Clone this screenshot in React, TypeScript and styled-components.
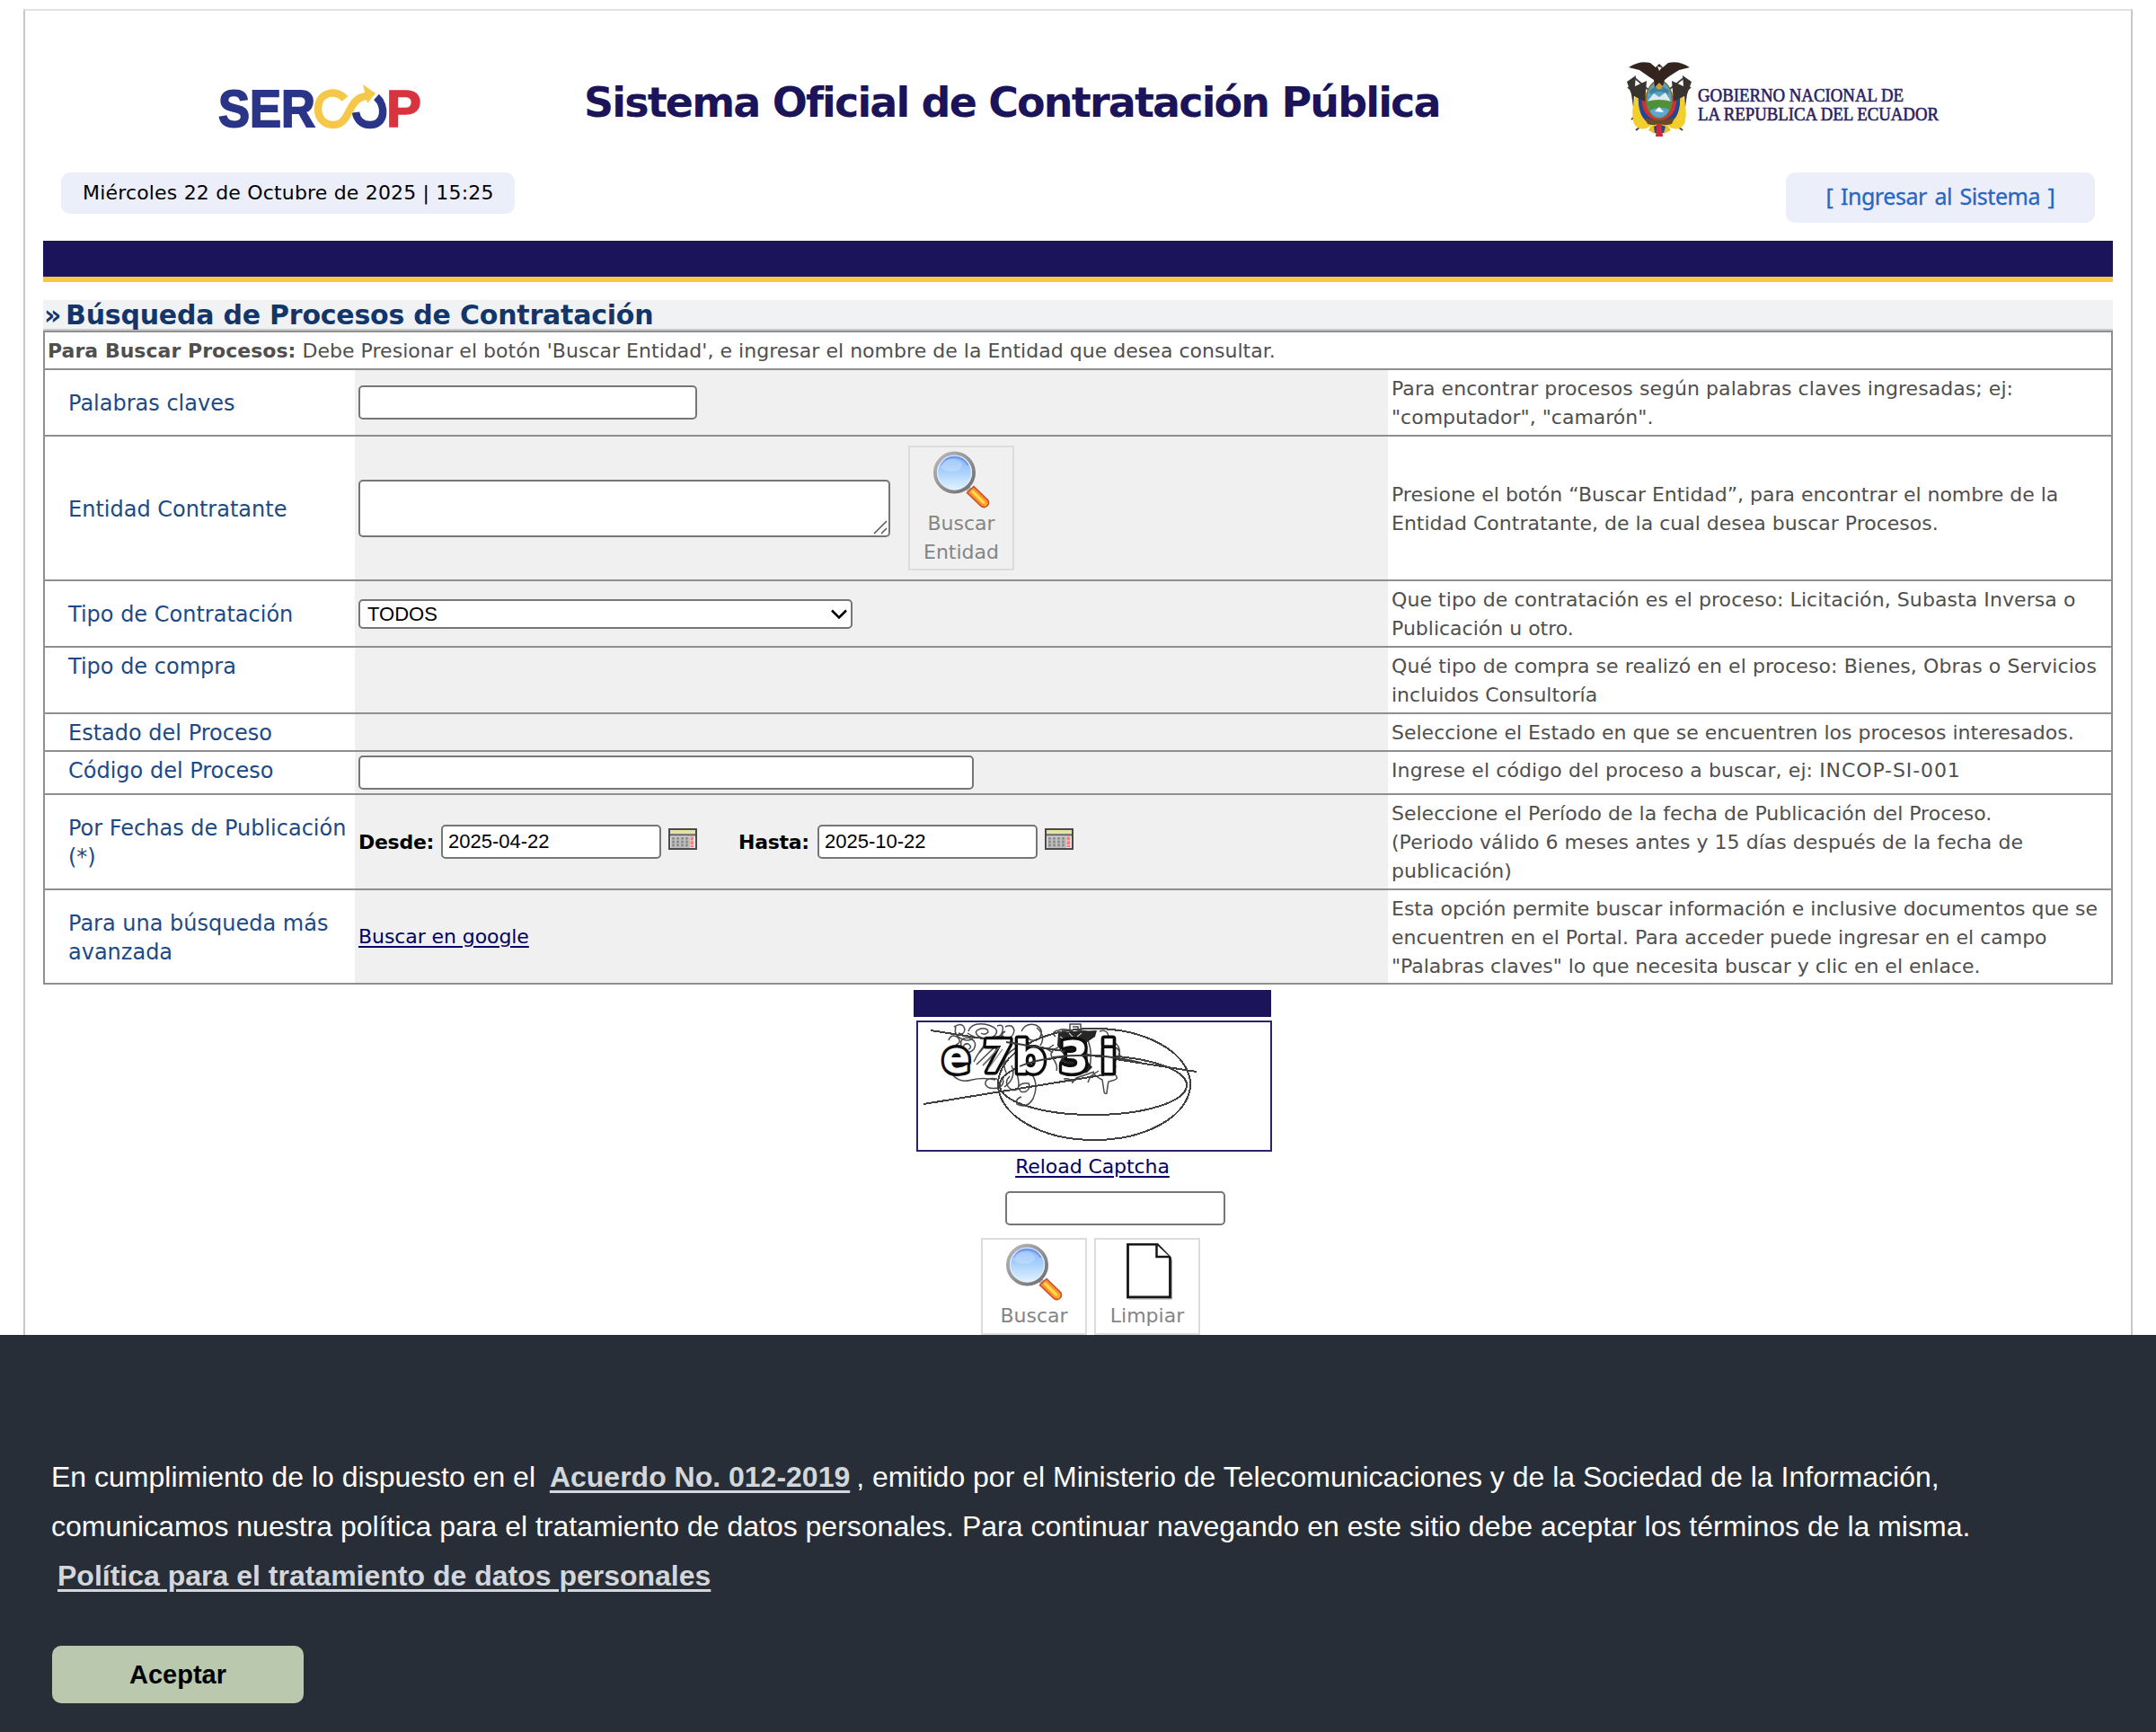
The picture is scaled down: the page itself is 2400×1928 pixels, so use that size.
import React from "react";
import styled, { createGlobalStyle, css } from "styled-components";

const verdana = `Verdana, "DejaVu Sans", sans-serif`;
const arial = `Arial, "Liberation Sans", sans-serif`;
const navy = "#1b145b";
const line = "#8f8f8f";

const GlobalStyle = createGlobalStyle`
  *, *::before, *::after { box-sizing: border-box; }
  html, body { margin: 0; padding: 0; background: #fff; }
  body { height: 1928px; overflow: hidden; font-family: ${verdana}; font-size: 22px; line-height: 32px; color: #000; }
`;

const Page = styled.div`
  width: 2400px;
  height: 1928px;
  padding: 10px 26px 0;
  overflow: hidden;
`;

const Frame = styled.main`
  height: 2000px;
  padding: 0 20px;
  border: 2px solid #c8c8c8;
  border-top-color: #dfe2e8;
`;

/* ---------- header ---------- */

const Header = styled.header`
  display: grid;
  grid-template-columns: 602px 1161px 1fr;
  height: 180px;
`;

const LogoCell = styled.div<{ $top: number; $left?: number }>`
  padding: ${(p) => p.$top}px 0 0 ${(p) => p.$left ?? 0}px;
  svg { display: block; overflow: visible; }
`;

const SiteTitle = styled.h1`
  margin: 0;
  padding-top: 73px;
  color: ${navy};
  font-size: 46px;
  line-height: 58px;
  font-weight: 700;
  letter-spacing: -1.85px;
  white-space: nowrap;
`;

const InfoBar = styled.div`
  display: flex;
  justify-content: space-between;
  align-items: flex-start;
  height: 76px;
  padding: 0 20px;
`;

const DatePill = styled.div`
  width: 505px;
  height: 46px;
  padding: 1px 0 0 24px;
  border-radius: 10px;
  background: #eceff9;
  line-height: 44px;
  letter-spacing: 0.18px;
  white-space: nowrap;
`;

const LoginLink = styled.a`
  display: flex;
  justify-content: center;
  width: 344px;
  height: 56px;
  border-radius: 10px;
  background: #eceff9;
  color: #2566c8;
  font: 400 25px/53px "Noto Sans", sans-serif;
  letter-spacing: -0.45px;
  word-spacing: 2.5px;
  -webkit-text-stroke: 0.3px #2566c8;
  text-decoration: none;
`;

const NavBar = styled.nav`
  height: 46px;
  background: ${navy};
  border-bottom: 6px solid #f9c646;
`;

/* ---------- search form ---------- */

const SectionTitle = styled.h2`
  margin: 20px 0 0;
  height: 34px;
  border-bottom: 2px solid #c9cbcc;
  background: #f1f2f4;
  color: #12366a;
  font-size: 30px;
  line-height: 33px;
  font-weight: 700;
  letter-spacing: -0.22px;
  white-space: nowrap;
`;

const Chevrons = styled.span`
  display: inline-block;
  width: 25px;
  padding-left: 1px;
`;

const FormTable = styled.section`
  border: 2px solid ${line};
  border-bottom: 0;
`;

const Intro = styled.p`
  margin: 0;
  height: 42px;
  padding: 5px 4px 0 3px;
  border-bottom: 2px solid ${line};
  color: #4f4f4f;
  letter-spacing: 0.03px;
`;

const Label = styled.label`
  display: flex;
  align-items: center;
  padding: 2px 0 0 26px;
  color: #1c4a86;
  font-size: 24px;
`;

const Field = styled.div`
  display: flex;
  align-items: center;
  padding-left: 4px;
  background: #f0f0f0;
`;

const Help = styled.div`
  display: flex;
  align-items: center;
  padding: 2px 0 0 4px;
  color: #4f4f4f;
  white-space: nowrap;
`;

const Row = styled.div<{ $height: number; $top?: boolean }>`
  display: grid;
  grid-template-columns: 345px 1150px 1fr;
  height: ${(p) => p.$height}px;
  border-bottom: 2px solid ${line};
  ${(p) => p.$top && css`
    & > ${Label}, & > ${Help} { align-items: flex-start; padding-top: 5px; }
  `}
`;

const HelpLine = styled.span<{ $track?: number }>`
  display: block;
  letter-spacing: ${(p) => p.$track ?? 0}px;
`;

const Code = styled.span`
  letter-spacing: 0.9px;
`;

const boxed = css`
  margin: 0;
  border: 2px solid #767676;
  border-radius: 5px;
  background: #fff;
  color: #000;
  font: 22px ${arial};
  outline: 0;
`;

const TextInput = styled.input<{ $width: number }>`
  ${boxed}
  width: ${(p) => p.$width}px;
  height: 38px;
  padding: 0 6px 1px;
`;

const AreaWrap = styled.div`
  position: relative;
  width: 592px;
  height: 64px;
  margin-right: 20px;
  svg { position: absolute; right: 3px; bottom: 3px; }
`;

const TextArea = styled.textarea`
  ${boxed}
  display: block;
  width: 100%;
  height: 100%;
  resize: none;
`;

const SelectWrap = styled.div`
  position: relative;
  height: 33px;
  margin-top: 1px;
  svg { position: absolute; right: 6px; top: 11px; pointer-events: none; }
`;

const Select = styled.select`
  ${boxed}
  display: block;
  appearance: none;
  width: 550px;
  height: 33px;
  padding: 0 8px;
`;

const DateLabel = styled.b<{ $gap?: number }>`
  width: ${(p) => p.$gap ?? 92}px;
  margin-top: 2px;
  letter-spacing: -0.28px;
`;

const CalendarIcon = styled.svg`
  flex: none;
  display: block;
  margin: -7px 46px 0 8px;
`;

const Link = styled.a`
  color: #000066;
  text-decoration: underline;
  text-decoration-thickness: 2px;
  text-underline-offset: 3px;
  letter-spacing: -0.08px;
`;

const ToolButton = styled.button<{ $height: number }>`
  display: flex;
  flex-direction: column;
  align-items: center;
  flex: none;
  width: 118px;
  height: ${(p) => p.$height}px;
  padding: 4px 0 0;
  border: 2px solid #dcdcdc;
  background: transparent;
  color: #858585;
  font: 22px/32px ${verdana};
  svg { display: block; flex: none; margin-bottom: 1px; }
`;

/* ---------- captcha ---------- */

const CaptchaArea = styled.div`
  display: flex;
  flex-direction: column;
  align-items: center;
  width: 398px;
  margin: 6px 0 0 969px;
`;

const CaptchaBar = styled.div`
  width: 398px;
  height: 30px;
  background: ${navy};
`;

const CaptchaImage = styled.div`
  width: 396px;
  height: 146px;
  margin: 4px 0 1px 4px;
  border: 2px solid #2c2469;
  svg { display: block; }
`;

const ReloadRow = styled.div`
  height: 32px;
  margin-bottom: 11px;
`;

const CaptchaInput = styled(TextInput)`
  margin-left: 51px;
`;

const Actions = styled.div`
  display: flex;
  gap: 8px;
  margin: 14px 4px 0 0;
`;

/* ---------- privacy banner ---------- */

const Banner = styled.aside`
  position: fixed;
  left: 0;
  right: 0;
  bottom: 0;
  height: 442px;
  padding: 131px 58px 0 57px;
  background: #272e38;
  color: #fff;
  font: 32px/55px ${arial};
`;

const BannerText = styled.p`
  margin: 0 0 50px;
  white-space: nowrap;
`;

const BannerLink = styled.a`
  margin: 0 7px;
  color: #d3d6da;
  font-weight: 700;
  text-decoration: underline;
  text-decoration-thickness: 3px;
  text-underline-offset: 4px;
`;

const AcceptButton = styled.button`
  display: block;
  width: 280px;
  height: 64px;
  margin-left: 1px;
  padding: 0;
  border: 0;
  border-radius: 10px;
  background: #bac8ae;
  color: #000;
  font: 700 29px/62px ${arial};
`;

/* ---------- drawings ---------- */

const SercopLogo = () => (
  <svg width="226" height="50" viewBox="0 0 226 50" fontFamily="Liberation Sans, Arial, sans-serif" fontWeight="700" fontSize="57">
    <text x="-1" y="43" textLength="108" lengthAdjust="spacingAndGlyphs" fill="#2b3587" stroke="#2b3587" strokeWidth="1.800">SER</text>
    <text x="186" y="43" textLength="39" lengthAdjust="spacingAndGlyphs" fill="#d8343f" stroke="#d8343f" strokeWidth="1.500">P</text>
    <path d="M175 10 C186 20 185 41 168 41 C158 41 153 34 152 27" fill="none" stroke="#2b3587" strokeWidth="8.500" />
    <path d="M140 12 C131 1 110 4 110 23 C110 36 119 41 127 41 C147 41 142 11 164 9" fill="none" stroke="#f6c849" strokeWidth="8.500" />
    <path d="M160 -4 L174 6 L165 17 Z" fill="#f6c849" />
  </svg>
);

const CoatOfArms = () => (
  <svg width="350" height="90" viewBox="0 0 350 90">
    <g stroke="#4b4440" strokeWidth="2" fill="none">
      <path d="M1 30 L62 78 M71 30 L10 78 M9 20 L64 68 M63 20 L5 66" />
    </g>
    <path d="M12 32 Q3 55 8 71 Q15 81 27 73 L22 36Z" fill="#f3cf2e" />
    <path d="M60 32 Q69 55 64 71 Q57 81 45 73 L50 36Z" fill="#f3cf2e" />
    <path d="M13 38 Q11 64 27 72 L45 72 Q61 64 59 38 L50 40 L22 40Z" fill="#23468c" />
    <path d="M17 40 Q15 64 36 68 Q57 64 55 40Z" fill="#d22f36" />
    <path d="M0 24 L10 17 L9 29 L22 23 L20 46 L8 40 L7 52 L5 38Z" fill="#38332f" />
    <path d="M72 24 L62 17 L63 29 L50 23 L52 46 L64 40 L65 52 L67 38Z" fill="#38332f" />
    <ellipse cx="36" cy="44" rx="14.500" ry="21" fill="#5aa3c0" stroke="#84692c" strokeWidth="1.500" />
    <path d="M25 34 Q36 24 47 34 L46 38 Q36 32 26 38Z" fill="#3f7fa0" />
    <circle cx="36" cy="29" r="3.500" fill="#c9a030" />
    <path d="M23 46 L30 37 L36 41 L43 36 L49 46Z" fill="#dfe9ee" />
    <path d="M22 46 Q36 42 50 46 L48 55 Q36 50 25 56Z" fill="#4f9139" />
    <path d="M26 57 Q36 50 46 57 Q36 68 26 57Z" fill="#5ea7d8" />
    <path d="M31 57 L36 52 L41 58Z" fill="#fff" />
    <path d="M20 64 Q36 70 53 64 L50 71 Q36 75 23 71Z" fill="#6b4c22" />
    <path d="M27 73 L35 71 L31 82 L24 78Z" fill="#e7c02c" />
    <path d="M45 73 L37 71 L41 82 L49 78Z" fill="#e7c02c" />
    <path d="M30 74 L36 71 L43 74 L41 81 L31 81Z" fill="#23468c" />
    <path d="M33.500 71 L38.500 71 L40 85 L32 85Z" fill="#c92b3a" />
    <path d="M2 8 Q14 0 26 3 L32 8 L36 4 L40 8 L46 3 Q58 0 70 8 L58 11 L47 18 L42 22 L40 29 L36 25 L31 30 L30 22 L24 18 L14 11Z" fill="#33241f" />
    <path d="M34 7 L39 8 L36 12Z" fill="#f1ece4" />
    <g fill="#2a2163" stroke="#2a2163" strokeWidth="0.600" fontFamily="Liberation Serif, Times New Roman, serif" fontSize="20.500">
      <text x="79" y="46" textLength="229" lengthAdjust="spacingAndGlyphs">GOBIERNO NACIONAL DE</text>
      <text x="79" y="67" textLength="268" lengthAdjust="spacingAndGlyphs">LA REPUBLICA DEL ECUADOR</text>
    </g>
  </svg>
);

const Magnifier = ({ id }: { id: string }) => (
  <svg width="64" height="64" viewBox="0 0 64 64">
    <defs>
      <linearGradient id={`${id}-glass`} x1="0" y1="0" x2="0" y2="1">
        <stop offset="0" stopColor="#85b0f7" />
        <stop offset="0.45" stopColor="#a5cffc" />
        <stop offset="1" stopColor="#e8f6ff" />
      </linearGradient>
      <linearGradient id={`${id}-rim`} x1="0" y1="0" x2="1" y2="1">
        <stop offset="0" stopColor="#b9b9b9" />
        <stop offset="1" stopColor="#6d6d6d" />
      </linearGradient>
      <linearGradient id={`${id}-grip`} x1="0" y1="1" x2="1" y2="0">
        <stop offset="0.25" stopColor="#e2571c" />
        <stop offset="0.5" stopColor="#ffb733" />
        <stop offset="0.8" stopColor="#e2501c" />
      </linearGradient>
    </defs>
    <path d="M36 38 L44 46" stroke="#b5b5b5" strokeWidth="6" />
    <path d="M38.500 46.500 L46 39.500 L61.500 54.500 Q64 58 60.500 61.500 Q57 64 53.500 61 Z" fill={`url(#${id}-grip)`} stroke="#cf4a30" strokeWidth="1.500" />
    <path d="M45 45.500 L56.500 57" stroke="#ffdc55" strokeWidth="3" strokeLinecap="round" />
    <circle cx="24.500" cy="24" r="21.500" fill={`url(#${id}-glass)`} stroke={`url(#${id}-rim)`} strokeWidth="4" />
    <circle cx="24.500" cy="24" r="19" fill="none" stroke="#e4edf8" strokeWidth="1.200" />
    <path d="M9.500 16 A17 17 0 0 1 39.500 16" fill="none" stroke="#5f86e6" strokeWidth="1.800" opacity="0.7" />
    <ellipse cx="21" cy="16" rx="12" ry="7" fill="#fff" opacity="0.22" />
  </svg>
);

const BlankPage = () => (
  <svg width="64" height="64" viewBox="0 0 64 64">
    <path d="M10.500 1 H43 L57.500 16 V60 H10.500 Z" fill="#fff" stroke="#161616" strokeWidth="2.800" />
    <path d="M42.500 1.500 V15 H57" fill="#fff" stroke="#161616" strokeWidth="2.500" />
    <path d="M12 62 H59.500 V18" fill="none" stroke="#a5a5a5" strokeWidth="1" />
  </svg>
);

const Calendar = () => (
  <CalendarIcon width="32" height="24" viewBox="0 0 32 24">
    <rect x="1" y="1" width="30" height="22" fill="#e4e4e4" stroke="#4a4a4a" strokeWidth="2" />
    <rect x="2" y="2" width="28" height="4.500" fill="#e6e1a6" />
    <rect x="2" y="6.200" width="28" height="2.300" fill="#6f6f6f" />
    <path d="M3 9.500 H24 V22 H3Z" fill="#bdbdbd" />
    <path d="M5.500 10 V21 M10.500 10 V21 M15.500 10 V21 M20.500 10 V21" stroke="#858585" strokeWidth="2.400" strokeDasharray="2.600 1.200" />
    <path d="M26.300 9.500 V21" stroke="#ff7a74" strokeWidth="3.500" strokeDasharray="4 0.800" />
  </CalendarIcon>
);

const Captcha = () => (
  <svg width="392" height="142" viewBox="2 2 392 142">
    <g fill="none" stroke="#4a4a4a" strokeWidth="1.500">
      <path d="M42 7 q10 -6 12 3 q-1 7 -7 4 M44 7 q-3 10 8 14 q8 3 12 -3 M36 22 q2 -7 9 -4 q7 6 -1 9 M50 28 q-2 -9 8 -9 q11 4 6 13 q-7 7 -12 0 q0 -7 6 -6 q5 4 0 6" />
      <path d="M58 12 q3 -10 18 -8 q18 4 12 12 q-8 7 -18 2 q-8 -6 2 -9 q8 -1 8 4 q-4 4 -8 1 M57 14 q12 8 22 5 M90 6 q8 -3 6 6 q-2 8 -10 6 M99 7 q8 -4 10 4 q-1 9 -10 9 q-7 -4 0 -8" />
      <path d="M64 46 Q80 14 98 18 M67 49 L95 22 M70 36 L84 20 M74 50 L100 24 M80 56 L106 28 M84 60 L112 34 M62 66 q12 -3 26 0 M90 65 q-14 -2 -13 6 q2 6 14 4 q9 -4 4 -12 M98 74 q14 -10 8 -24" />
      <path d="M117 12 q5 -10 16 -7 q10 5 4 15 q-8 5 -13 -1 M134 8 q11 9 4 20 M100 58 q-8 -18 12 -28 M104 62 q-8 8 2 15 q12 4 6 -18 M112 77 q3 -9 13 -7 q3 5 -3 9 q-7 2 -7 -3 M128 59 q9 12 2 28 q-7 12 -18 6 q-2 -6 5 -8" />
      <path d="M171 4 h12 v9 h-12z M174 7 h6 v4 M155 18 q-6 -5 3 -7 q8 -3 18 2 q10 -4 18 1 M158 30 q-12 5 -6 12 q6 8 4 14 M153 27 l-7 5 l6 4 M164 65 q8 -1 10 4 l4 -5 q12 -4 20 -7 M191 69 l3 -7 l9 -6" />
      <path d="M204 12 q10 -3 10 8 M220 24 q9 6 5 16 q-6 6 -3 12 M221 60 q6 5 -3 7 l-4 1 q-1 4 -2 13 q-3 1 -3 -2 l-2 -13 q-8 -4 -10 -8 M188 17 q9 12 5 36 M40 60 q8 10 22 6 M222 30 q6 3 4 12" />
    </g>
    <path d="M158 13 L201 11 L199 18 L190 24 L191 46 L196 52 L190 58 L168 62 L160 57 L159 47 L164 38 L157 28Z" fill="#262626" />
    <g fill="none" stroke="#c9c9c9" strokeWidth="1.200">
      <path d="M160 18 l6 4 M170 14 l5 5 M184 14 l-5 4 M160 50 l6 -3 M186 40 l5 3 M163 30 l-3 5" />
    </g>
    <g fill="none" stroke="#3f3f3f" strokeWidth="2" shapeRendering="crispEdges">
      <path d="M16 11 L312 57 M8 93 L212 60" />
      <ellipse cx="198" cy="71" rx="107" ry="62" />
      <ellipse cx="197" cy="72" rx="104" ry="33" />
    </g>
    <g fill="#fff" stroke="#0d0d0d" strokeWidth="7" strokeLinejoin="round" paintOrder="stroke" fontFamily="DejaVu Sans, Verdana, sans-serif" fontWeight="700" fontSize="49">
      <text x="29" y="57.500" textLength="31" lengthAdjust="spacingAndGlyphs">e</text>
      <text x="77" y="57.500" textLength="33" lengthAdjust="spacingAndGlyphs" transform="skewX(-5)">7</text>
      <text x="109" y="57.500" textLength="35" lengthAdjust="spacingAndGlyphs">b</text>
      <text x="159" y="57.500" textLength="33" lengthAdjust="spacingAndGlyphs">3</text>
      <text x="205" y="57.500" textLength="18" lengthAdjust="spacingAndGlyphs">i</text>
    </g>
    <path d="M100 24 L150 32 M152 41 Q175 38 200 39 Q225 41 250 47 M115 51 Q132 44 152 42" fill="none" stroke="#3a3a3a" strokeWidth="1.800" />
    <path d="M74 50 L92 30 M80 54 L96 32" fill="none" stroke="#777" strokeWidth="1.200" />
  </svg>
);

export default function App() {
  return (
    <>
      <GlobalStyle />
      <Page>
        <Frame>
          <Header>
            <LogoCell $top={86} $left={196}><SercopLogo /></LogoCell>
            <SiteTitle>Sistema Oficial de Contratación Pública</SiteTitle>
            <LogoCell $top={55}><CoatOfArms /></LogoCell>
          </Header>
          <InfoBar>
            <DatePill>Miércoles 22 de Octubre de 2025 | 15:25</DatePill>
            <LoginLink>[ Ingresar al Sistema ]</LoginLink>
          </InfoBar>
          <NavBar />

          <SectionTitle><Chevrons>»</Chevrons>Búsqueda de Procesos de Contratación</SectionTitle>
          <FormTable>
            <Intro>
              <b>Para Buscar Procesos:</b> Debe Presionar el botón 'Buscar Entidad', e ingresar el nombre de la Entidad que desea consultar.
            </Intro>

            <Row $height={74}>
              <Label>Palabras claves</Label>
              <Field><TextInput $width={377} /></Field>
              <Help>
                <div>
                  <HelpLine $track={0.06}>Para encontrar procesos según palabras claves ingresadas; ej:</HelpLine>
                  <HelpLine>"computador", "camarón".</HelpLine>
                </div>
              </Help>
            </Row>

            <Row $height={161}>
              <Label>Entidad Contratante</Label>
              <Field>
                <AreaWrap>
                  <TextArea />
                  <svg width="16" height="16" viewBox="0 0 16 16" stroke="#555" strokeWidth="1.500">
                    <path d="M1 15 L15 1 M9 15 L15 9" />
                  </svg>
                </AreaWrap>
                <ToolButton $height={139}>
                  <Magnifier id="entity" />
                  <span>Buscar</span>
                  <span>Entidad</span>
                </ToolButton>
              </Field>
              <Help>
                <div>
                  <HelpLine $track={-0.02}>Presione el botón “Buscar Entidad”, para encontrar el nombre de la</HelpLine>
                  <HelpLine>Entidad Contratante, de la cual desea buscar Procesos.</HelpLine>
                </div>
              </Help>
            </Row>

            <Row $height={74}>
              <Label>Tipo de Contratación</Label>
              <Field>
                <SelectWrap>
                  <Select defaultValue="TODOS"><option>TODOS</option></Select>
                  <svg width="18" height="12" viewBox="0 0 18 12" fill="none" stroke="#000" strokeWidth="2.500">
                    <path d="M1 1.500 L9 9.500 L17 1.500" />
                  </svg>
                </SelectWrap>
              </Field>
              <Help>
                <div>
                  <HelpLine $track={0.08}>Que tipo de contratación es el proceso: Licitación, Subasta Inversa o</HelpLine>
                  <HelpLine>Publicación u otro.</HelpLine>
                </div>
              </Help>
            </Row>

            <Row $height={74} $top>
              <Label>Tipo de compra</Label>
              <Field />
              <Help>
                <div>
                  <HelpLine $track={0.086}>Qué tipo de compra se realizó en el proceso: Bienes, Obras o Servicios</HelpLine>
                  <HelpLine>incluidos Consultoría</HelpLine>
                </div>
              </Help>
            </Row>

            <Row $height={42} $top>
              <Label>Estado del Proceso</Label>
              <Field />
              <Help><HelpLine>Seleccione el Estado en que se encuentren los procesos interesados.</HelpLine></Help>
            </Row>

            <Row $height={48} $top>
              <Label>Código del Proceso</Label>
              <Field><TextInput $width={685} /></Field>
              <Help><HelpLine $track={0.1}>Ingrese el código del proceso a buscar, ej: <Code>INCOP-SI-001</Code></HelpLine></Help>
            </Row>

            <Row $height={106}>
              <Label>Por Fechas de Publicación (*)</Label>
              <Field>
                <DateLabel>Desde:</DateLabel>
                <TextInput $width={245} defaultValue="2025-04-22" />
                <Calendar />
                <DateLabel $gap={88}>Hasta:</DateLabel>
                <TextInput $width={245} defaultValue="2025-10-22" />
                <Calendar />
              </Field>
              <Help>
                <div>
                  <HelpLine>Seleccione el Período de la fecha de Publicación del Proceso.</HelpLine>
                  <HelpLine $track={0.04}>(Periodo válido 6 meses antes y 15 días después de la fecha de</HelpLine>
                  <HelpLine>publicación)</HelpLine>
                </div>
              </Help>
            </Row>

            <Row $height={105}>
              <Label>Para una búsqueda más avanzada</Label>
              <Field><Link>Buscar en google</Link></Field>
              <Help>
                <div>
                  <HelpLine>Esta opción permite buscar información e inclusive documentos que se</HelpLine>
                  <HelpLine>encuentren en el Portal. Para acceder puede ingresar en el campo</HelpLine>
                  <HelpLine $track={-0.03}>"Palabras claves" lo que necesita buscar y clic en el enlace.</HelpLine>
                </div>
              </Help>
            </Row>
          </FormTable>

          <CaptchaArea>
            <CaptchaBar />
            <CaptchaImage><Captcha /></CaptchaImage>
            <ReloadRow><Link>Reload Captcha</Link></ReloadRow>
            <CaptchaInput $width={245} />
            <Actions>
              <ToolButton $height={108}>
                <Magnifier id="search" />
                <span>Buscar</span>
              </ToolButton>
              <ToolButton $height={108}>
                <BlankPage />
                <span>Limpiar</span>
              </ToolButton>
            </Actions>
          </CaptchaArea>
        </Frame>
      </Page>

      <Banner>
        <BannerText>
          En cumplimiento de lo dispuesto en el <BannerLink>Acuerdo No. 012-2019</BannerLink>, emitido por el Ministerio de Telecomunicaciones y de la Sociedad de la Información,
          <br />
          comunicamos nuestra política para el tratamiento de datos personales. Para continuar navegando en este sitio debe aceptar los términos de la misma.
          <br />
          <BannerLink>Política para el tratamiento de datos personales</BannerLink>
        </BannerText>
        <AcceptButton>Aceptar</AcceptButton>
      </Banner>
    </>
  );
}
